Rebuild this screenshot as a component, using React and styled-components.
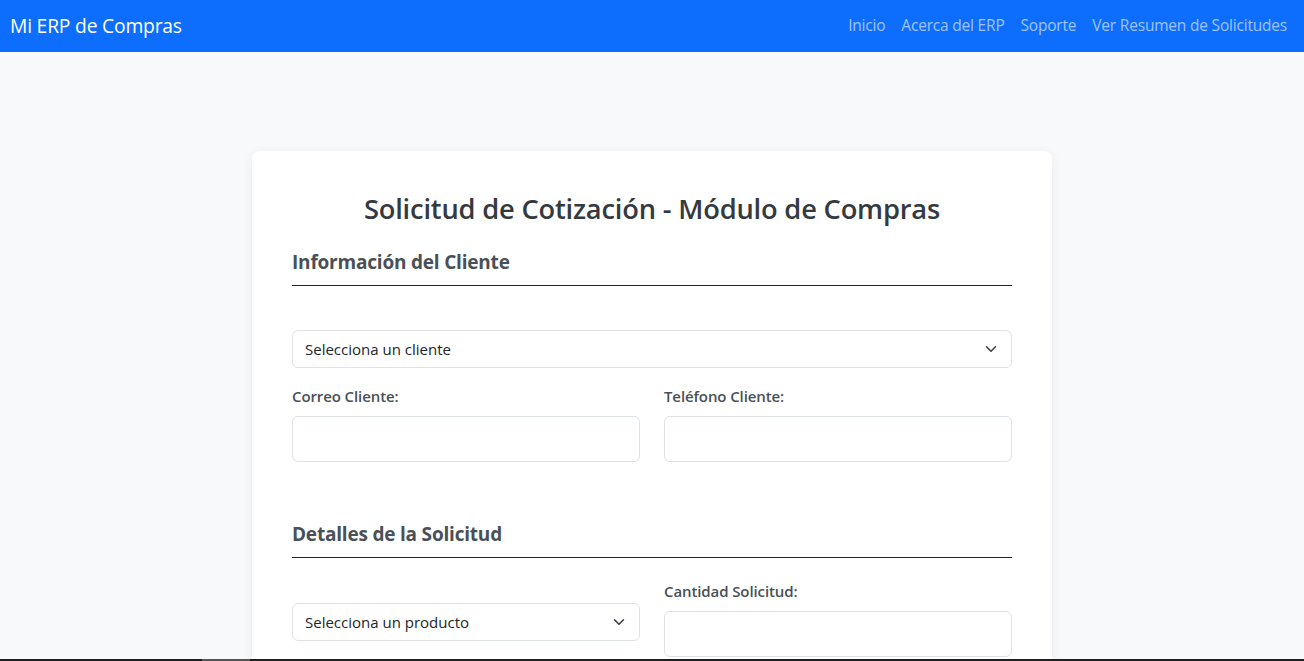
import React from 'react'
import styled, { createGlobalStyle } from 'styled-components'

const GlobalStyle = createGlobalStyle`
  * { box-sizing: border-box; }
  body {
    margin: 0;
    background: #f8f9fa;
    font-family: "Open Sans", "Noto Sans", "Liberation Sans", sans-serif;
    color: #212529;
  }
`

const Navbar = styled.nav`
  height: 52px;
  background: #0d6efd;
  display: flex;
  align-items: center;
  justify-content: space-between;
  padding: 0 9px 2px 10px;
`

const Brand = styled.a`
  color: #fff;
  font-size: 19.3px;
  text-decoration: none;
  letter-spacing: -0.2px;
`

const NavLinks = styled.div`
  display: flex;
  align-items: center;
`

const NavLink = styled.a`
  color: rgba(255, 255, 255, 0.6);
  font-size: 15.5px;
  padding: 0 8px;
  text-decoration: none;
  letter-spacing: -0.2px;
`

const Main = styled.main`
  display: flex;
  justify-content: center;
  padding-top: 99px;
`

const Card = styled.div`
  width: 800px;
  background: #fff;
  border-radius: 8px;
  box-shadow: 0 2px 12px rgba(0, 0, 0, 0.06);
  padding: 40px;
`

const Title = styled.h2`
  margin: 0 0 22px;
  text-align: center;
  font-size: 27.3px;
  font-weight: 600;
  line-height: 36px;
  color: #343a40;
  letter-spacing: -0.2px;
`

const SectionTitle = styled.h4`
  margin: 0;
  padding-bottom: 10px;
  border-bottom: 1px solid #212529;
  font-size: 19px;
  font-weight: 700;
  line-height: 26px;
  color: #495057;
  letter-spacing: -0.2px;
`

const Section = styled.section`
  margin-top: ${p => p.$top || 0}px;
`

const Body = styled.div`
  padding-top: ${p => p.$pad}px;
  display: flex;
  flex-direction: column;
  gap: 18px;
`

const Row = styled.div`
  display: grid;
  grid-template-columns: 1fr 1fr;
  column-gap: 24px;
  align-items: end;
`

const Field = styled.div`
  display: flex;
  flex-direction: column;
`

const Label = styled.label`
  font-size: 15px;
  font-weight: 600;
  line-height: 20px;
  color: #495057;
  margin-bottom: 10px;
  letter-spacing: -0.1px;
`

const Input = styled.input`
  height: 46px;
  border: 1px solid #dee2e6;
  border-radius: 6px;
  padding: 0 12px;
  font: inherit;
  background: #fff;
`

const SelectBox = styled.div`
  position: relative;
  height: 38px;
  border: 1px solid #dee2e6;
  border-radius: 6px;
  display: flex;
  align-items: center;
  padding: 0 12px;
  font-size: 15px;
  color: #212529;
  background: #fff;
  margin-bottom: ${p => p.$mb || 0}px;
`

const Chevron = styled.svg`
  position: absolute;
  right: 14px;
  top: 50%;
  transform: translateY(-50%);
`

const TaskEdge = styled.div`
  position: fixed;
  left: 0;
  right: 0;
  bottom: 0;
  height: 2px;
  background: #1f1f1f;
`

const TaskMark = styled.div`
  position: absolute;
  left: 202px;
  width: 48px;
  top: 0;
  bottom: 0;
  background: #555;
`

function Select({ children, mb }) {
  return (
    <SelectBox $mb={mb}>
      {children}
      <Chevron width="12" height="12" viewBox="0 0 16 16" fill="none">
        <path d="M2 5l6 6 6-6" stroke="#343a40" strokeWidth="2" strokeLinecap="round" strokeLinejoin="round" />
      </Chevron>
    </SelectBox>
  )
}

export default function App() {
  return (
    <>
      <GlobalStyle />
      <Navbar>
        <Brand href="#">Mi ERP de Compras</Brand>
        <NavLinks>
          <NavLink href="#">Inicio</NavLink>
          <NavLink href="#">Acerca del ERP</NavLink>
          <NavLink href="#">Soporte</NavLink>
          <NavLink href="#">Ver Resumen de Solicitudes</NavLink>
        </NavLinks>
      </Navbar>
      <Main>
        <Card>
          <Title>Solicitud de Cotización - Módulo de Compras</Title>
          <Section>
            <SectionTitle>Información del Cliente</SectionTitle>
            <Body $pad={44}>
              <Select>Selecciona un cliente</Select>
              <Row>
                <Field>
                  <Label>Correo Cliente:</Label>
                  <Input type="email" />
                </Field>
                <Field>
                  <Label>Teléfono Cliente:</Label>
                  <Input type="tel" />
                </Field>
              </Row>
            </Body>
          </Section>
          <Section $top={59}>
            <SectionTitle>Detalles de la Solicitud</SectionTitle>
            <Body $pad={23}>
              <Row>
                <Select mb={16}>Selecciona un producto</Select>
                <Field>
                  <Label>Cantidad Solicitud:</Label>
                  <Input type="number" />
                </Field>
              </Row>
            </Body>
          </Section>
        </Card>
      </Main>
      <TaskEdge><TaskMark /></TaskEdge>
    </>
  )
}
